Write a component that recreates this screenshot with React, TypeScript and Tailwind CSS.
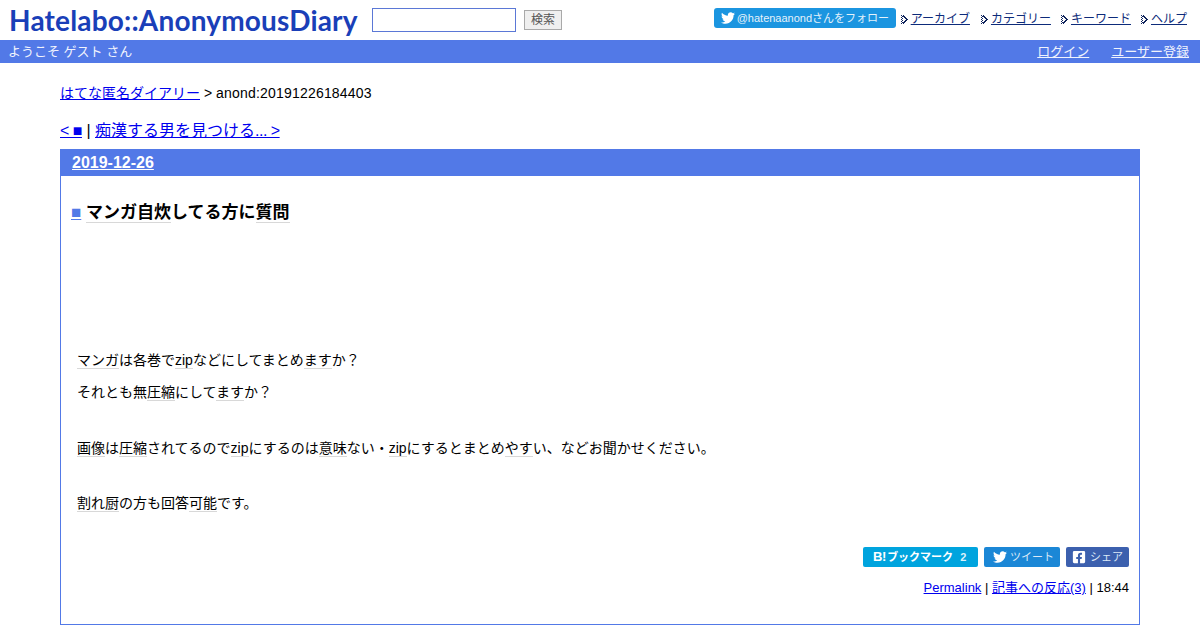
import { FaTwitter, FaFacebookSquare } from "react-icons/fa";

const font = { fontFamily: '"Liberation Sans", "Noto Sans CJK JP", sans-serif' };

function K({ children }: { children: React.ReactNode }) {
  return <span className="border-b border-[#d8d8d8]">{children}</span>;
}

function Chevrons() {
  return (
    <svg width="7" height="9" viewBox="0 0 7 9" className="mr-[3px] shrink-0" shapeRendering="crispEdges">
      <path d="M0 0h1v1h-1zM0 2h1v1h-1zM0 4h1v1h-1zM0 6h1v1h-1zM0 8h1v1h-1zM1 1h1v1h-1zM1 3h1v1h-1zM1 5h1v1h-1zM1 7h1v1h-1z" fill="#10245c" />
      <path d="M2 0h1v1h1v1h1v1h1v1h1v1h-1v1h-1v1h-1v1h-1v1h-1v-2h1v-1h1v-1h1v-1h-1v-1h-1v-1h-1z" fill="#10245c" />
    </svg>
  );
}

function NavItem({ label, className }: { label: string; className?: string }) {
  return (
    <span className={`flex items-center ${className ?? ""}`}>
      <Chevrons />
      <a className="text-[12px] leading-[14px] text-[#0d2b7a] underline">{label}</a>
    </span>
  );
}

export default function App() {
  return (
    <div style={font} className="w-[1200px] h-[630px] overflow-hidden bg-white text-black">
      <header className="h-10 flex items-center pl-[8px] pr-[13px]">
        <div className="w-[352px] text-[28px] leading-[40px] font-bold text-[#1a3fb8] tracking-[0.18px] whitespace-nowrap pl-[1px] pb-[1px]" style={{ fontFamily: '"Lato", sans-serif' }}>
          Hatelabo::AnonymousDiary
        </div>
        <div className="ml-[12px] w-[144px] h-6 border border-[#5b78d6] bg-white" />
        <div className="ml-2 w-[38px] h-5 border border-[#a9a9a9] bg-[#efefef] text-[#555] text-[12px] leading-[18px] text-center">検索</div>
        <div className="ml-auto mb-[2px] flex items-center">
          <div className="w-[182px] h-5 mb-[2px] rounded-[3px] bg-[#1b95e0] text-white flex items-center pl-[7px] mr-[5px]">
            <FaTwitter className="text-[14px] mr-[1px]" />
            <span className="ml-[1px] text-[11px] text-[#e4f2fb] whitespace-nowrap">@hatenaanondさんをフォロー</span>
          </div>
          <NavItem label="アーカイブ" />
          <NavItem label="カテゴリー" className="ml-[11px]" />
          <NavItem label="キーワード" className="ml-[10px]" />
          <NavItem label="ヘルプ" className="ml-[10px]" />
        </div>
      </header>

      <div className="h-[23px] bg-[#5279e7] flex items-center justify-between pl-[8px] pr-[11px] text-[13px] text-[#f0f3fd]">
        <span>ようこそ ゲスト さん</span>
        <span className="flex gap-[22px]">
          <a className="underline">ログイン</a>
          <a className="underline">ユーザー登録</a>
        </span>
      </div>

      <main className="mx-[60px]">
        <div className="pt-[21px] text-[14px] leading-[18px]">
          <a className="text-[#0000ee] underline">はてな匿名ダイアリー</a> &gt; <span className="tracking-[0.2px]">anond:20191226184403</span>
        </div>
        <div className="mt-[19px] text-[16px] leading-[20px]">
          <a className="text-[#0000ee] underline tracking-[-0.5px]">&lt; ■</a> | <a className="text-[#0000ee] underline">痴漢する男を見つける<span className="tracking-[-0.5px]">... &gt;</span></a>
        </div>
        <section className="mt-[8px] h-[476px] border border-[#5279e7]">
          <div className="h-[26px] bg-[#5279e7] pl-[11px] text-[16px] leading-[26px] font-bold text-white">
            <a className="underline">2019-12-26</a>
          </div>
          <h1 className="mt-[26px] pl-[10px] text-[17px] leading-[22px] font-bold">
            <a className="text-[#5279e7] underline font-normal">■</a>{" "}
            <K>マンガ自炊</K>してる方に<K>質問</K>
          </h1>
          <div className="mt-[126px] pl-[16px] text-[14px] leading-[20px]">
            <p><K>マンガ</K>は各巻で<K>zip</K>などにしてまとめ<K>ます</K>か？</p>
            <p className="mt-[12px]">それとも無<K>圧縮</K>にして<K>ます</K>か？</p>
            <p className="mt-[36px]"><K>画像</K>は<K>圧縮</K>されてるので<K>zip</K>にするのは<K>意味</K>ない・<K>zip</K>にするとまとめ<K>やす</K>い、などお聞かせください。</p>
            <p className="mt-[35px]"><K>割れ厨</K>の方も回答<K>可能</K>です。</p>
          </div>
          <div className="mt-[34px] pr-[10px] flex justify-end gap-[6px] text-[11px] leading-[20px] text-[#dce9f7]">
            <div className="w-[115px] h-5 rounded-[2px] bg-[#00a4de] text-white font-bold text-[11px] pl-[10px] whitespace-nowrap"><span className="text-[13px] tracking-[-0.3px] mr-[1px]">B!</span>ブックマーク<span className="ml-[7px] text-[#dcf1fa]">2</span></div>
            <div className="w-[76px] h-5 rounded-[2px] bg-[#1b87d6] flex items-center pl-[9px] whitespace-nowrap"><FaTwitter className="text-[14px] text-white mr-[3px]" />ツイート</div>
            <div className="w-[63px] h-5 rounded-[2px] bg-[#3c60ae] flex items-center pl-[6px] whitespace-nowrap"><FaFacebookSquare className="text-[14px] text-white mr-[4px]" />シェア</div>
          </div>
          <div className="mt-[11px] pr-[10px] text-right text-[13px] leading-[20px]">
            <a className="text-[#0000ee] underline">Permalink</a> | <a className="text-[#0000ee] underline">記事への反応(3)</a> | 18:44
          </div>
        </section>
      </main>
    </div>
  );
}
